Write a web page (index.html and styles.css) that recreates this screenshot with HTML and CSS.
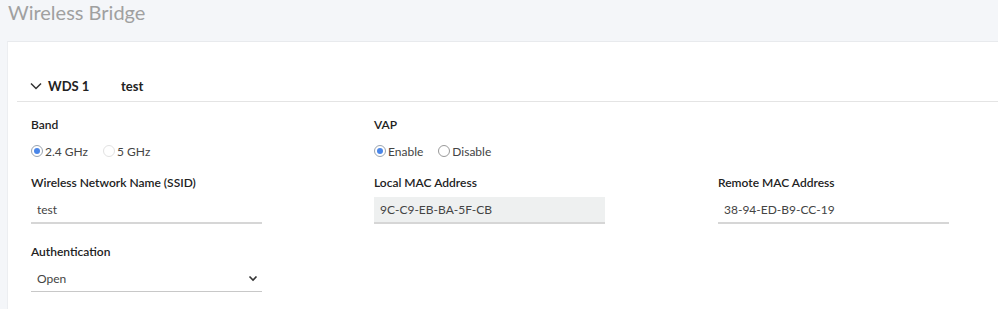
FILE: index.html
```html
<!DOCTYPE html>
<html lang="en">
<head>
    <meta charset="UTF-8">
    <title>Wireless Bridge</title>
    <link rel="stylesheet" href="styles.css">
</head>
<body>
    <div class="page-title">Wireless Bridge</div>

    <div class="card">
        <div class="section-header">
            <svg class="chevron" width="12" height="8" viewBox="0 0 12 8">
                <path d="M1 1.5 L6 6.5 L11 1.5" fill="none" stroke="#333" stroke-width="1.5"/>
            </svg>
            <span class="section-name">WDS 1</span>
            <span class="section-ssid">test</span>
        </div>

        <div class="form-grid">
            <div class="field">
                <div class="field-label">Band</div>
                <div class="radio-group">
                    <label class="radio"><span class="radio-dot checked"></span>2.4 GHz</label>
                    <label class="radio"><span class="radio-dot faint"></span>5 GHz</label>
                </div>
            </div>
            <div class="field">
                <div class="field-label">VAP</div>
                <div class="radio-group">
                    <label class="radio"><span class="radio-dot checked"></span>Enable</label>
                    <label class="radio"><span class="radio-dot"></span>Disable</label>
                </div>
            </div>
            <div class="field"></div>

            <div class="field">
                <div class="field-label">Wireless Network Name (SSID)</div>
                <div class="input">test</div>
            </div>
            <div class="field">
                <div class="field-label">Local MAC Address</div>
                <div class="input readonly">9C-C9-EB-BA-5F-CB</div>
            </div>
            <div class="field">
                <div class="field-label">Remote MAC Address</div>
                <div class="input">38-94-ED-B9-CC-19</div>
            </div>

            <div class="field field-last">
                <div class="field-label">Authentication</div>
                <div class="input select">
                    Open
                    <svg class="select-arrow" width="10" height="7" viewBox="0 0 10 7">
                        <path d="M1.5 1.5 L5 5 L8.5 1.5" fill="none" stroke="#333" stroke-width="1.6"/>
                    </svg>
                </div>
            </div>
        </div>
    </div>
</body>
</html>
```

FILE: styles.css
```css
html, body {
    height: 309px;
    overflow: hidden;
}

body {
    margin: 0;
    background: #f4f6f9;
    font-family: 'Lato', 'Noto Sans', sans-serif;
    color: #222;
}

.page-title {
    font-size: 20px;
    color: #a0a0a0;
    padding-left: 8px;
    height: 41px;
    line-height: 24px;
}

.card {
    background: #fff;
    margin-left: 7px;
    border-top: 1px solid #e8eaed;
    border-left: 1px solid #eceef1;
    padding-left: 9px;
    height: 267px;
}

.section-header {
    display: flex;
    align-items: center;
    height: 60px;
    box-sizing: border-box;
    padding: 28px 0 0 13px;
    border-bottom: 1px solid #e4e4e4;
}

.chevron {
    margin-right: 6px;
}

.section-name {
    font-size: 13px;
    font-weight: 700;
    width: 73px;
}

.section-ssid {
    font-size: 13px;
    font-weight: 700;
}

.form-grid {
    display: grid;
    grid-template-columns: 343px 344px 260px;
    padding-left: 14px;
    padding-top: 14px;
    row-gap: 14px;
}

.field-last {
    margin-top: 5px;
}

.field-label {
    font-size: 12px;
    font-weight: 600;
    color: #222;
    height: 18px;
    line-height: 18px;
}

.radio-group {
    display: flex;
    gap: 15px;
    margin-top: 8px;
    height: 18px;
    align-items: center;
}

.radio {
    display: flex;
    align-items: center;
    font-size: 12px;
    color: #444;
}

.radio-dot {
    width: 10px;
    height: 10px;
    border: 1px solid #999;
    border-radius: 50%;
    margin-right: 2px;
    position: relative;
}

.radio-dot.faint {
    border-color: #e2e2e2;
}

.radio-dot.checked {
    border-color: #9aa4b0;
}

.radio-dot.checked::after {
    content: '';
    position: absolute;
    left: 2px;
    top: 2px;
    width: 6px;
    height: 6px;
    border-radius: 50%;
    background: #4a86e8;
}

.input {
    width: 231px;
    height: 27px;
    box-sizing: border-box;
    margin-top: 5px;
    border-bottom: 2px solid #d6d6d6;
    font-size: 12px;
    color: #444;
    padding-left: 6px;
    line-height: 25px;
}

.input.readonly {
    background: #eef0f0;
}

.input.select {
    display: flex;
    align-items: center;
    justify-content: space-between;
    height: 26px;
    padding-right: 4px;
    border-bottom: 1px solid #c8c8c8;
}
```
